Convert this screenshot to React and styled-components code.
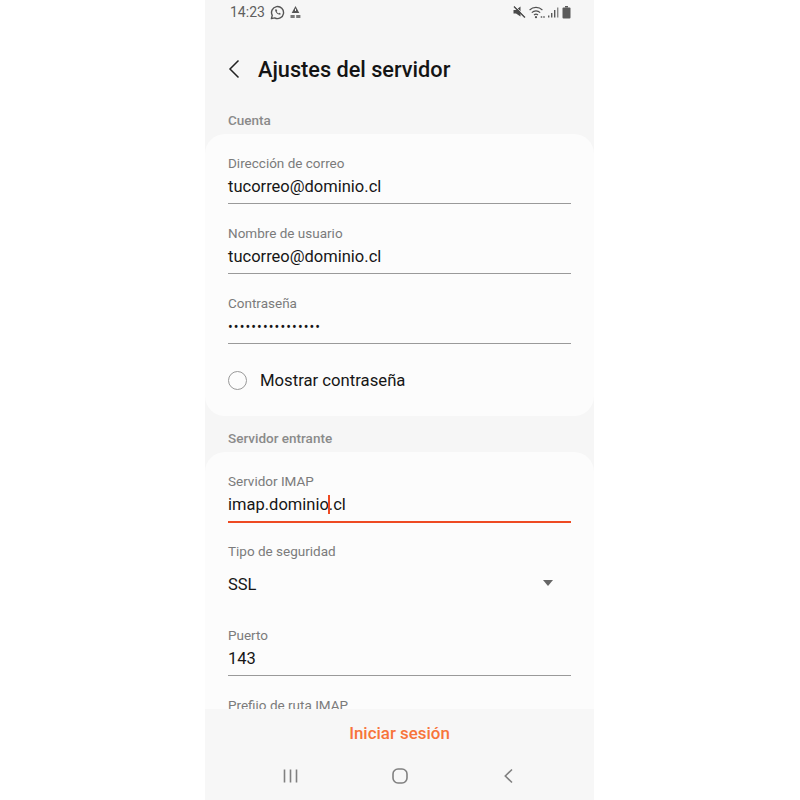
import React from 'react'
import styled, { createGlobalStyle } from 'styled-components'

const GlobalStyle = createGlobalStyle`
  html, body {
    margin: 0;
    padding: 0;
    background: #fff;
  }
  body {
    font-family: Roboto, "Liberation Sans", sans-serif;
  }
`

const Page = styled.div`
  width: 800px;
  height: 800px;
  display: flex;
  justify-content: center;
  background: #fff;
  overflow: hidden;
`

const Phone = styled.div`
  width: 389px;
  height: 800px;
  margin-left: -1px;
  display: flex;
  flex-direction: column;
  background: #f6f6f6;
`

const StatusBar = styled.div`
  height: 24px;
  flex: none;
  padding: 0 23px 0 25px;
  display: flex;
  align-items: center;
  justify-content: space-between;
`

const StatusGroup = styled.div`
  display: flex;
  align-items: center;
  gap: ${p => p.$gap || 4}px;
`

const Clock = styled.span`
  font-size: 14px;
  color: #5f5f5f;
`

const Header = styled.div`
  height: 76px;
  flex: none;
  box-sizing: border-box;
  padding: 14px 0 0 23px;
  display: flex;
  align-items: center;
  gap: 18px;
`

const Title = styled.h1`
  margin: 0;
  font-size: 21.7px;
  font-weight: 500;
  color: #141414;
`

const Content = styled.div`
  flex: 1;
  min-height: 0;
  overflow: hidden;
`

const SectionLabel = styled.div`
  height: ${p => p.$height}px;
  box-sizing: border-box;
  padding: ${p => p.$top}px 0 0 23px;
  font-size: 13.5px;
  line-height: 16px;
  font-weight: 500;
  color: #8a8a8a;
`

const Card = styled.div`
  background: #fcfcfc;
  border-radius: 20px;
  padding: 20px 23px 0 23px;
`

const Field = styled.div`
  height: 70px;
`

const FieldLabel = styled.div`
  font-size: 13.5px;
  line-height: 18px;
  color: #7b7b7b;
`

const FieldValue = styled.div`
  font-size: 16.5px;
  line-height: 23px;
  height: 23px;
  margin-top: 3px;
  padding-bottom: 5px;
  color: #161616;
  border-bottom: ${p => (p.$active ? '2px solid #ee4a22' : '1px solid #9a9a9a')};
`

const Cursor = styled.span`
  display: inline-block;
  width: 2px;
  height: 19px;
  margin: 0 -1px;
  vertical-align: -4px;
  background: #ee4a22;
`

const Dots = styled.span`
  font-size: 14px;
  letter-spacing: 1.1px;
  color: #161616;
`

const CheckRow = styled.div`
  height: 52px;
  display: flex;
  align-items: flex-start;
  gap: 13px;
  padding-top: 7px;
  box-sizing: border-box;
`

const Radio = styled.span`
  width: 19px;
  height: 19px;
  box-sizing: border-box;
  border: 1px solid #999;
  border-radius: 50%;
  flex: none;
`

const CheckLabel = styled.span`
  font-size: 16.7px;
  line-height: 20px;
  color: #161616;
`

const SelectRow = styled.div`
  height: 84px;
`

const SelectValue = styled.div`
  margin-top: 13px;
  padding-right: 18px;
  display: flex;
  align-items: center;
  justify-content: space-between;
  font-size: 16.5px;
  line-height: 23px;
  color: #161616;
`

const Caret = styled.span`
  width: 0;
  height: 0;
  margin-top: -4px;
  border-left: 5px solid transparent;
  border-right: 5px solid transparent;
  border-top: 6px solid #666;
`

const Footer = styled.div`
  flex: none;
  height: 91px;
  background: #f7f7f7;
  display: flex;
  flex-direction: column;
`

const Action = styled.div`
  height: 47px;
  display: flex;
  align-items: center;
  justify-content: center;
  font-size: 16.9px;
  font-weight: 500;
  color: #f7743a;
`

const NavBar = styled.div`
  height: 44px;
  display: flex;
  align-items: flex-start;
  justify-content: space-between;
  padding: 12px 81px 0 78px;
  box-sizing: border-box;
`

const Whatsapp = () => (
  <svg width="15" height="15" viewBox="0 0 14 14" fill="none" stroke="#555" strokeWidth="1.3">
    <path d="M1.3 12.7l.8-3A5.6 5.6 0 1 1 4.4 12z" strokeLinejoin="round" />
    <path d="M4.8 4.3c-.4 2 2.4 5 4.7 4.9l.6-1.1-1.5-.8-.6.6c-.7-.3-1.4-1-1.8-1.8l.6-.6-.8-1.5z" fill="#555" stroke="none" />
  </svg>
)

const AlertBadge = () => (
  <svg width="11" height="14" viewBox="0 0 11 14" fill="#555">
    <path d="M5.5 1L9.3 8H1.7z" />
    <rect x="5" y="3.8" width="1" height="2.2" fill="#f6f6f6" />
    <rect x="0.5" y="10" width="4.2" height="3" fill="#777" />
    <rect x="6.2" y="10" width="4.2" height="3" fill="#777" />
  </svg>
)

const Muted = () => (
  <svg width="13" height="12" viewBox="0 0 13 12">
    <path d="M0.5 4h2.5L7.5 0.5v10L3 7.5H0.5z" fill="#4a4a4a" />
    <path d="M1 0.5l11 11" stroke="#4a4a4a" strokeWidth="1.5" />
    <path d="M2 0l10.5 10.5" stroke="#f6f6f6" strokeWidth="0.7" />
  </svg>
)

const Wifi = () => (
  <svg width="16" height="13" viewBox="0 0 16 13" fill="none" stroke="#4f4f4f" strokeWidth="1.1">
    <path d="M0.6 4a9.2 9.2 0 0 1 12.8 0" />
    <path d="M2.8 6.6a6 6 0 0 1 8.4 0" />
    <path d="M5 9a3 3 0 0 1 4 0" />
    <circle cx="7" cy="11.2" r="1.1" fill="#4f4f4f" stroke="none" />
    <circle cx="12.5" cy="11" r="0.9" fill="#777" stroke="none" />
    <circle cx="15" cy="11" r="0.9" fill="#777" stroke="none" />
  </svg>
)

const Signal = () => (
  <svg width="11" height="11" viewBox="0 0 11 11" fill="#5a5a5a">
    <rect x="0" y="8.5" width="1.4" height="2" />
    <rect x="3" y="6" width="1.4" height="4.5" />
    <rect x="6" y="3" width="1.4" height="7.5" />
    <rect x="9" y="0.5" width="1.4" height="10" fill="#888" />
  </svg>
)

const Battery = () => (
  <svg width="9" height="13" viewBox="0 0 9 13" fill="#5a5a5a">
    <rect x="3" y="0" width="3" height="1.5" />
    <rect x="0.5" y="1.5" width="8" height="11" rx="1" />
  </svg>
)

const BackChevron = () => (
  <svg width="12" height="20" viewBox="0 0 12 20" fill="none" stroke="#222" strokeWidth="1.5">
    <path d="M10.5 1.5L2 10l8.5 8.5" />
  </svg>
)

const NavRecents = () => (
  <svg width="15" height="16" viewBox="0 0 15 16" stroke="#808080" strokeWidth="1.6">
    <path d="M1.5 1.5v13M7.5 1.5v13M13.5 1.5v13" />
  </svg>
)

const NavHome = () => (
  <svg width="16" height="16" viewBox="0 0 16 16" fill="none" stroke="#808080" strokeWidth="1.6">
    <rect x="1" y="1" width="14" height="14" rx="5" />
  </svg>
)

const NavBack = () => (
  <svg width="11" height="16" viewBox="0 0 11 16" fill="none" stroke="#808080" strokeWidth="1.6">
    <path d="M10 1.5L3.3 8l6.7 6.5" />
  </svg>
)

const App = () => {
  return (
    <Page>
      <GlobalStyle />
      <Phone>
        <StatusBar>
          <StatusGroup $gap={5}>
            <Clock>14:23</Clock>
            <Whatsapp />
            <AlertBadge />
          </StatusGroup>
          <StatusGroup $gap={3}>
            <Muted />
            <Wifi />
            <Signal />
            <Battery />
          </StatusGroup>
        </StatusBar>

        <Header>
          <BackChevron />
          <Title>Ajustes del servidor</Title>
        </Header>

        <Content>
          <SectionLabel $height={34} $top={12}>Cuenta</SectionLabel>
          <Card>
            <Field>
              <FieldLabel>Dirección de correo</FieldLabel>
              <FieldValue>tucorreo@dominio.cl</FieldValue>
            </Field>
            <Field>
              <FieldLabel>Nombre de usuario</FieldLabel>
              <FieldValue>tucorreo@dominio.cl</FieldValue>
            </Field>
            <Field>
              <FieldLabel>Contraseña</FieldLabel>
              <FieldValue><Dots>••••••••••••••••</Dots></FieldValue>
            </Field>
            <CheckRow>
              <Radio />
              <CheckLabel>Mostrar contraseña</CheckLabel>
            </CheckRow>
          </Card>

          <SectionLabel $height={36} $top={14}>Servidor entrante</SectionLabel>
          <Card>
            <Field>
              <FieldLabel>Servidor IMAP</FieldLabel>
              <FieldValue $active>imap.dominio<Cursor />.cl</FieldValue>
            </Field>
            <SelectRow>
              <FieldLabel>Tipo de seguridad</FieldLabel>
              <SelectValue>
                SSL
                <Caret />
              </SelectValue>
            </SelectRow>
            <Field>
              <FieldLabel>Puerto</FieldLabel>
              <FieldValue>143</FieldValue>
            </Field>
            <Field>
              <FieldLabel>Prefijo de ruta IMAP</FieldLabel>
            </Field>
          </Card>
        </Content>

        <Footer>
          <Action>Iniciar sesión</Action>
          <NavBar>
            <NavRecents />
            <NavHome />
            <NavBack />
          </NavBar>
        </Footer>
      </Phone>
    </Page>
  )
}

export default App
